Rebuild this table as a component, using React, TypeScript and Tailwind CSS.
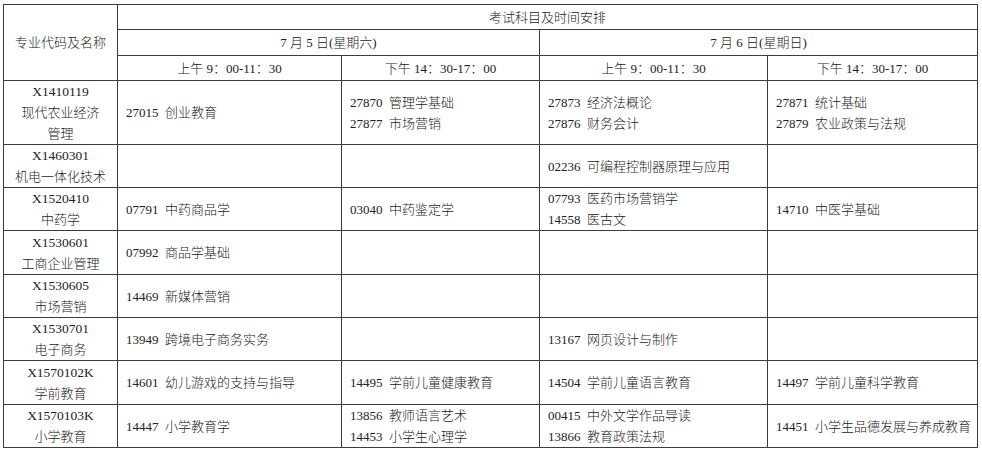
import React from "react";

type Row = { code: string; name: string[]; cells: string[][]; h: string };

const rows: Row[] = [
  { code: "X1410119", name: ["现代农业经济", "管理"], cells: [["27015  创业教育"], ["27870  管理学基础", "27877  市场营销"], ["27873  经济法概论", "27876  财务会计"], ["27871  统计基础", "27879  农业政策与法规"]], h: "h-[64px]" },
  { code: "X1460301", name: ["机电一体化技术"], cells: [[], [], ["02236  可编程控制器原理与应用"], []], h: "h-[43px]" },
  { code: "X1520410", name: ["中药学"], cells: [["07791  中药商品学"], ["03040  中药鉴定学"], ["07793  医药市场营销学", "14558  医古文"], ["14710  中医学基础"]], h: "h-[43px]" },
  { code: "X1530601", name: ["工商企业管理"], cells: [["07992  商品学基础"], [], [], []], h: "h-[44px]" },
  { code: "X1530605", name: ["市场营销"], cells: [["14469  新媒体营销"], [], [], []], h: "h-[43px]" },
  { code: "X1530701", name: ["电子商务"], cells: [["13949  跨境电子商务实务"], [], ["13167  网页设计与制作"], []], h: "h-[43px]" },
  { code: "X1570102K", name: ["学前教育"], cells: [["14601  幼儿游戏的支持与指导"], ["14495  学前儿童健康教育"], ["14504  学前儿童语言教育"], ["14497  学前儿童科学教育"]], h: "h-[44px]" },
  { code: "X1570103K", name: ["小学教育"], cells: [["14447  小学教育学"], ["13856  教师语言艺术", "14453  小学生心理学"], ["00415  中外文学作品导读", "13866  教育政策法规"], ["14451  小学生品德发展与养成教育"]], h: "h-[42px]" },
];

const bd = "border border-[#3c3c3c]";

export default function App() {
  return (
    <div className="w-[982px] h-[452px] bg-white pt-[4px] pl-[3px]" style={{ fontFamily: '"Liberation Serif", "Noto Sans CJK SC", serif' }}>
      <table className="table-fixed border-collapse text-[13px] leading-[21px] font-light text-[#222] w-[974px]">
        <colgroup>
          <col className="w-[114px]" />
          <col className="w-[224px]" />
          <col className="w-[198px]" />
          <col className="w-[228px]" />
          <col className="w-[210px]" />
        </colgroup>
        <tbody>
          <tr className="h-[25px]">
            <td rowSpan={3} className={`${bd} text-center align-middle p-0`}>专业代码及名称</td>
            <td colSpan={4} className={`${bd} text-center p-0`}>考试科目及时间安排</td>
          </tr>
          <tr className="h-[26px]">
            <td colSpan={2} className={`${bd} text-center p-0`}>7 月 5 日(星期六)</td>
            <td colSpan={2} className={`${bd} text-center p-0`}>7 月 6 日(星期日)</td>
          </tr>
          <tr className="h-[25px]">
            <td className={`${bd} text-center p-0`}>上午 9：00-11：30</td>
            <td className={`${bd} text-center p-0`}>下午 14：30-17：00</td>
            <td className={`${bd} text-center p-0`}>上午 9：00-11：30</td>
            <td className={`${bd} text-center p-0`}>下午 14：30-17：00</td>
          </tr>
          {rows.map((r) => (
            <tr key={r.code} className={r.h}>
              <td className={`${bd} text-center align-middle p-0`}>
                <div className="text-[13.5px]">{r.code}</div>
                {r.name.map((n) => (
                  <div key={n}>{n}</div>
                ))}
              </td>
              {r.cells.map((c, i) => (
                <td key={i} className={`${bd} align-middle py-0 pl-[8px] pr-0 whitespace-pre`}>
                  {c.map((t) => (
                    <div key={t}>{t}</div>
                  ))}
                </td>
              ))}
            </tr>
          ))}
        </tbody>
      </table>
    </div>
  );
}
